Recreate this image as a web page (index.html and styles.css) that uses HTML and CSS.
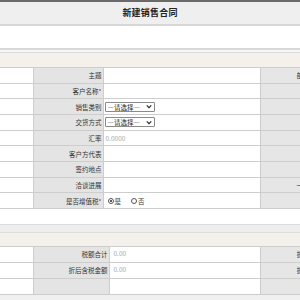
FILE: index.html
```html
<!DOCTYPE html>
<html lang="zh">
<head>
<meta charset="utf-8">
<title>新建销售合同</title>
<link rel="stylesheet" href="styles.css">
</head>
<body>
<div class="page">
  <div class="topbar"></div>
  <div class="titlebar">新建销售合同</div>
  <div class="blank"></div>
  <div class="sep"></div>
  <div class="secbar"></div>
  <table class="form form-main">
    <colgroup><col class="c1"><col class="c2"><col class="c3"><col class="c4"></colgroup>
    <tr><td></td><td class="lbl">主题</td><td></td><td class="rlbl">部门</td></tr>
    <tr><td></td><td class="lbl">客户名称<span class="req">*</span></td><td></td><td class="rlbl"></td></tr>
    <tr><td></td><td class="lbl">销售类别</td><td class="val"><span class="select"><span class="opt">—请选择—</span><svg class="chev" viewBox="0 0 8 6" width="6" height="5"><path d="M1 1.5 L4 4.5 L7 1.5" fill="none" stroke="#222" stroke-width="1.5"/></svg></span></td><td class="rlbl"></td></tr>
    <tr><td></td><td class="lbl">交货方式</td><td class="val"><span class="select"><span class="opt">—请选择—</span><svg class="chev" viewBox="0 0 8 6" width="6" height="5"><path d="M1 1.5 L4 4.5 L7 1.5" fill="none" stroke="#222" stroke-width="1.5"/></svg></span></td><td class="rlbl"></td></tr>
    <tr><td></td><td class="lbl">汇率</td><td class="val"><span class="ph">0.0000</span></td><td class="rlbl"></td></tr>
    <tr><td></td><td class="lbl">客户方代表</td><td></td><td class="rlbl"></td></tr>
    <tr><td></td><td class="lbl">签约地点</td><td></td><td class="rlbl"></td></tr>
    <tr><td></td><td class="lbl">洽谈进展</td><td></td><td class="rlbl">一般</td></tr>
    <tr><td></td><td class="lbl">是否增值税<span class="req">*</span></td><td class="val"><span class="radio on"></span><span class="rtxt">是</span><span class="radio"></span><span class="rtxt">否</span></td><td class="rlbl"></td></tr>
  </table>
  <div class="gap"></div>
  <div class="sep2"></div>
  <div class="secbar secbar2"></div>
  <table class="form form-sum">
    <colgroup><col class="c1"><col class="s2"><col class="s3"><col class="c4"></colgroup>
    <tr><td></td><td class="lbl">税额合计</td><td class="val top"><span class="ph">0.00</span></td><td class="rlbl">折扣</td></tr>
    <tr><td></td><td class="lbl">折后含税金额</td><td class="val top"><span class="ph">0.00</span></td><td class="rlbl">折后</td></tr>
    <tr><td></td><td class="lbl"></td><td></td><td class="rlbl"></td></tr>
  </table>
  <div class="foot"></div>
</div>
</body>
</html>
```
FILE: styles.css
```css
html, body {
  margin: 0;
  padding: 0;
  background: #ffffff;
  overflow: hidden;
}
.page {
  width: 300px;
  height: 300px;
  overflow: hidden;
  font-family: "Noto Sans CJK SC", "Noto Sans", sans-serif;
  color: #333;
  background: #efefef;
}
.topbar {
  height: 2px;
  background: #6a6a6a;
}
.titlebar {
  height: 22px;
  line-height: 22px;
  background: #efefef;
  border-bottom: 2px solid #d6d6d6;
  text-align: center;
  font-size: 9px;
  font-weight: bold;
  color: #222;
  letter-spacing: 0.2px;
}
.blank {
  height: 22px;
  background: #ffffff;
}
.sep {
  height: 2px;
  border-top: 2px solid #d9d9d9;
  border-bottom: 1px solid #dcdcdc;
  background: #f6f6f6;
}
.secbar {
  height: 14px;
  background: #f4f1ed;
}
.secbar2 {
  height: 13px;
}
.form {
  border-collapse: collapse;
  table-layout: fixed;
  width: 331px;
  background: #ffffff;
}
.form td {
  border: 1px solid #cdcdcd;
  padding: 0;
  font-size: 6.5px;
  line-height: 8px;
  white-space: nowrap;
  overflow: hidden;
}
.form tr td:first-child {
  border-left: none;
}
.form-main tr {
  height: 15.67px;
}
.form-sum tr {
  height: 16px;
}
.c1 { width: 33px; }
.c2 { width: 70px; }
.c3 { width: 157px; }
.c4 { width: 71px; }
.s2 { width: 76px; }
.s3 { width: 151px; }
.form td.lbl {
  background: #e4e4e4;
  text-align: right;
  padding-right: 1px;
  color: #333;
}
.form td.rlbl {
  background: #e6e6e6;
  padding-left: 36px;
  color: #333;
}
.req {
  color: #d01010;
}
.form td.val {
  padding-left: 1px;
}
.form td.val.top {
  vertical-align: top;
  padding-top: 2px;
  padding-left: 3px;
}
.select {
  display: inline-flex;
  align-items: center;
  justify-content: space-between;
  box-sizing: border-box;
  width: 50px;
  height: 10px;
  border: 1px solid #8a8a8a;
  border-radius: 1px;
  background: #fff;
  padding: 0 2px 0 2px;
  vertical-align: middle;
}
.opt {
  font-size: 6.5px;
  line-height: 8px;
  color: #222;
}
.chev {
  display: block;
}
.ph {
  color: #a8a8a8;
  padding-left: 1px;
}
.radio {
  display: inline-block;
  box-sizing: border-box;
  width: 6px;
  height: 6px;
  border: 1px solid #555;
  border-radius: 50%;
  vertical-align: middle;
  margin-left: 3px;
  position: relative;
  background: #fff;
}
.radio.on::after {
  content: "";
  position: absolute;
  left: 1px;
  top: 1px;
  width: 2px;
  height: 2px;
  border-radius: 50%;
  background: #222;
}
.rtxt {
  vertical-align: middle;
  margin-left: 1px;
  margin-right: 7px;
}
.gap {
  height: 15px;
  background: #ffffff;
}
.sep2 {
  height: 7px;
  border-top: 1px solid #dcdcdc;
  border-bottom: 1px solid #dcdcdc;
  background: #eeeeee;
}
.foot {
  height: 10px;
  background: #f0f0f0;
}
```
